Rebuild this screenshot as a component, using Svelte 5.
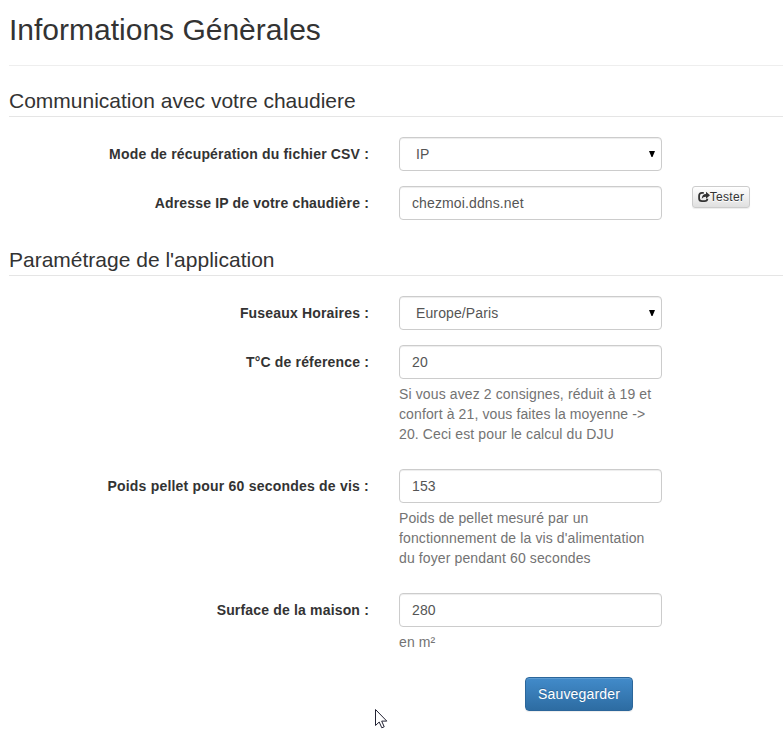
<script>
  let mode = $state('IP');
  let address = $state('chezmoi.ddns.net');
  let zone = $state('Europe/Paris');
  let reference = $state('20');
  let weight = $state('153');
  let surface = $state('280');
</script>

<main>
  <h1>Informations Génèrales</h1>
  <form onsubmit={(e) => e.preventDefault()}>
    <fieldset>
      <legend>Communication avec votre chaudiere</legend>
      <div class="row">
        <label for="mode">Mode de récupération du fichier CSV :</label>
        <div class="field select">
          <select id="mode" bind:value={mode}><option>IP</option></select>
          <svg class="arrow" width="6" height="6" viewBox="0 0 6 6"><path d="M0 0H6L3.5 6H2.5Z" /></svg>
        </div>
      </div>
      <div class="row">
        <label for="address">Adresse IP de votre chaudière :</label>
        <div class="field"><input id="address" bind:value={address} /></div>
        <button type="button" class="test">
          <svg width="12" height="12" viewBox="0 0 12 12">
            <path d="M5.8 1.9H4Q1.1 1.9 1.1 4.7V7.5Q1.1 10.2 4 10.2H6.5Q9.2 10.2 9.4 7.8" fill="none" stroke="#333" stroke-width="1.8" />
            <path d="M8 .7L12 4.3L8 7.8V5.7Q5.3 5.5 3.8 7.7Q3.9 3.1 8 2.9Z" fill="#333" />
          </svg>Tester
        </button>
      </div>
    </fieldset>
    <fieldset>
      <legend>Paramétrage de l'application</legend>
      <div class="row">
        <label for="zone">Fuseaux Horaires :</label>
        <div class="field select">
          <select id="zone" bind:value={zone}><option>Europe/Paris</option></select>
          <svg class="arrow" width="6" height="6" viewBox="0 0 6 6"><path d="M0 0H6L3.5 6H2.5Z" /></svg>
        </div>
      </div>
      <div class="row">
        <label for="reference">T°C de réference :</label>
        <div class="field">
          <input id="reference" bind:value={reference} />
          <p>Si vous avez 2 consignes, réduit à 19 et<br />confort à 21, vous faites la moyenne -&gt;<br />20. Ceci est pour le calcul du DJU</p>
        </div>
      </div>
      <div class="row">
        <label class="wide" for="weight">Poids pellet pour 60 secondes de vis :</label>
        <div class="field">
          <input id="weight" bind:value={weight} />
          <p>Poids de pellet mesuré par un<br />fonctionnement de la vis d'alimentation<br />du foyer pendant 60 secondes</p>
        </div>
      </div>
      <div class="row">
        <label for="surface">Surface de la maison :</label>
        <div class="field">
          <input id="surface" bind:value={surface} />
          <p>en m²</p>
        </div>
      </div>
    </fieldset>
    <div class="actions"><button class="save">Sauvegarder</button></div>
  </form>
  <svg class="cursor" width="13" height="20" viewBox="0 0 13 20">
    <path d="M.5 .5V16.5L4.2 13L6.8 18.8L9.2 17.8L6.7 12.1H11.8Z" fill="#fff" stroke="#223" />
  </svg>
</main>

<style>
  :global(body) { margin: 0; background: #fff; }
  main {
    position: relative;
    box-sizing: border-box;
    height: 747px;
    padding: 9px 0 0 9px;
    overflow: hidden;
    font: 14px/20px "Liberation Sans", Arial, sans-serif;
    color: #333;
  }
  h1 {
    box-sizing: border-box;
    height: 57px;
    margin: 0 0 20px;
    border-bottom: 1px solid #eee;
    font-size: 30px;
    line-height: 42px;
    font-weight: 400;
  }
  fieldset { min-width: 0; margin: 0; padding: 0; border: 0; }
  legend {
    display: block;
    box-sizing: border-box;
    width: 100%;
    height: 31px;
    margin: 0 0 20px;
    padding: 0;
    border-bottom: 1px solid #e5e5e5;
    font-size: 21px;
    line-height: 30px;
  }
  fieldset + fieldset { margin-top: 10px; }
  .row { display: flex; align-items: flex-start; padding-bottom: 15px; }
  fieldset + fieldset { margin-top: 10px; }
  label {
    width: 360px;
    padding-top: 7px;
    margin-right: 30px;
    font-weight: 700;
    letter-spacing: 0.17px;
    text-align: right;
  }
  label.wide { letter-spacing: 0.21px; }
  .field { position: relative; width: 263px; }
  input, select {
    display: block;
    box-sizing: border-box;
    width: 100%;
    height: 34px;
    margin: 0;
    padding: 6px 12px;
    border: 1px solid #ccc;
    border-radius: 4px;
    background: #fff;
    box-shadow: inset 0 1px 1px rgba(0, 0, 0, 0.075);
    color: #555;
    font: inherit;
    letter-spacing: 0.12px;
  }
  select { appearance: none; padding-left: 16px; }
  .arrow { position: absolute; right: 7px; top: 14px; fill: #000; pointer-events: none; }
  p { margin: 5px 0 10px; color: #737373; letter-spacing: 0.12px; white-space: nowrap; }
  button { font-family: inherit; box-sizing: border-box; }
  .test {
    display: flex;
    align-items: center;
    justify-content: center;
    width: 58px;
    height: 22px;
    margin-left: 30px;
    padding: 0;
    border: 1px solid #ccc;
    border-radius: 3px;
    background: linear-gradient(#fff, #e0e0e0);
    color: #333;
    font-size: 12px;
    letter-spacing: 0.28px;
    text-shadow: 0 1px 0 #fff;
    box-shadow: 0 1px 1px rgba(0, 0, 0, 0.075);
  }
  .test svg { flex: none; }
  .actions { display: flex; padding-left: 516px; }
  .save {
    width: 108px;
    height: 34px;
    padding: 0;
    border: 1px solid #2b669a;
    border-radius: 4px;
    background: linear-gradient(#428bca, #2d6ca2);
    color: #fff;
    font-size: 14px;
    letter-spacing: 0.17px;
    text-shadow: 0 -1px 0 rgba(0, 0, 0, 0.2);
    box-shadow: inset 0 1px 0 rgba(255, 255, 255, 0.15), 0 1px 1px rgba(0, 0, 0, 0.075);
  }
  .cursor { position: absolute; left: 375px; top: 709px; }
</style>
